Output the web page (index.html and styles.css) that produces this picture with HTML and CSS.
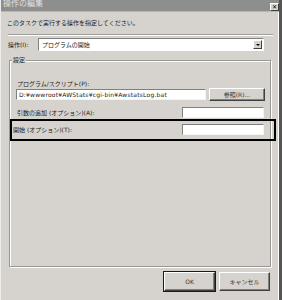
FILE: index.html
```html
<!DOCTYPE html>
<html lang="ja">
<head>
    <meta charset="UTF-8">
    <title>操作の編集</title>
    <link rel="stylesheet" href="styles.css">
</head>
<body>
    <div class="window">
        <div class="titlebar">
            <span class="title">操作の編集</span>
            <span class="close">&#x2715;</span>
        </div>

        <div class="content">
            <p class="intro">このタスクで実行する操作を指定してください。</p>
            <div class="sep"></div>

            <div class="action-row">
                <label class="action-label">操作(I):</label>
                <div class="select">
                    <span>プログラムの開始</span>
                    <span class="arrow"></span>
                </div>
            </div>

            <div class="group">
                <span class="legend">設定</span>
                <label class="path-label">プログラム/スクリプト(P):</label>
                <div class="path-row">
                    <div class="input path">D:¥wwwroot¥AWStats¥cgi-bin¥AwstatsLog.bat</div>
                    <button class="btn browse">参照(R)...</button>
                </div>
                <div class="field-row">
                    <label>引数の追加 (オプション)(A):</label>
                    <div class="input short"></div>
                </div>
                <div class="field-row highlight">
                    <label>開始 (オプション)(T):</label>
                    <div class="input short"></div>
                </div>
            </div>

            <div class="footer">
                <button class="btn default">OK</button>
                <button class="btn">キャンセル</button>
            </div>
        </div>
    </div>
</body>
</html>
```

FILE: styles.css
```css
* {
    box-sizing: border-box;
}
body {
    margin: 0;
    font-family: "DejaVu Sans", "Noto Sans CJK JP", sans-serif;
    font-size: 6px;
    color: #1a1a1a;
}
.window {
    width: 282px;
    height: 300px;
    background: #d6d3ce;
    border-left: 1px solid #ecebe7;
    border-right: 3px solid #555;
    box-shadow: inset -1px 0 0 #fff;
    overflow: hidden;
}
.titlebar {
    height: 12px;
    background: #8e8e8e;
    display: flex;
    justify-content: space-between;
    align-items: flex-start;
    border-bottom: 1px solid #b8b6b2;
}
.title {
    font-size: 8px;
    line-height: 8px;
    color: #e2e2e2;
    margin-left: 2px;
}
.close {
    width: 9px;
    height: 8px;
    margin-top: 3px;
    background: #d6d3ce;
    border: 1px solid;
    border-color: #fff #404040 #404040 #fff;
    font-size: 6px;
    line-height: 6px;
    text-align: center;
    color: #000;
    font-weight: bold;
}
.content {
    padding: 0 6px 0 7px;
}
.intro {
    margin: 7px 0 0 -1px;
    line-height: 8px;
    height: 8px;
}
.sep {
    margin-top: 7px;
    height: 2px;
    border-top: 1px solid #a09e9a;
    border-bottom: 1px solid #fff;
}
.action-row {
    display: flex;
    align-items: center;
    margin-top: 2px;
    height: 13px;
}
.action-label {
    width: 30px;
}
.select {
    width: 226px;
    height: 13px;
    background: #fff;
    border: 1px solid;
    border-color: #808080 #fff #fff #808080;
    display: flex;
    justify-content: space-between;
    align-items: center;
    padding-left: 3px;
}
.arrow {
    width: 9px;
    height: 9px;
    margin-right: 1px;
    background: #d6d3ce;
    border: 1px solid;
    border-color: #fff #404040 #404040 #fff;
    position: relative;
}
.arrow::after {
    content: "";
    position: absolute;
    left: 2px;
    top: 3px;
    border-left: 2px solid transparent;
    border-right: 2px solid transparent;
    border-top: 2px solid #000;
}
.group {
    margin: 9px 2px 0 1px;
    height: 207px;
    border: 1px solid #9a9894;
    box-shadow: inset 1px 1px 0 #fff, 1px 1px 0 #fff;
}
.legend {
    display: inline-block;
    margin: -5px 0 0 2px;
    padding: 0 1px;
    line-height: 8px;
    background: #d6d3ce;
    vertical-align: top;
}
.path-label {
    display: block;
    margin: 12px 0 0 7px;
    line-height: 8px;
}
.path-row {
    display: flex;
    align-items: center;
    gap: 3px;
    margin-left: 6px;
    height: 13px;
}
.input {
    background: #fff;
    border: 1px solid;
    border-color: #808080 #f4f4f4 #f4f4f4 #808080;
    height: 11px;
    line-height: 9px;
    padding-left: 2px;
    white-space: nowrap;
    overflow: hidden;
}
.path {
    width: 190px;
    letter-spacing: 0.2px;
}
.short {
    width: 82px;
}
.btn {
    font-family: inherit;
    font-size: 6px;
    color: #333;
    background: #d6d3ce;
    border: 1px solid;
    border-color: #fff #404040 #404040 #fff;
    box-shadow: inset -1px -1px 0 #808080;
    padding: 0;
    height: 13px;
}
.browse {
    width: 56px;
}
.field-row {
    display: flex;
    justify-content: space-between;
    align-items: center;
    margin: 6px 6px 0 0;
    padding-left: 7px;
    height: 11px;
}
.highlight {
    margin: 1px -6px 0 0;
    height: 22px;
    border: 2px solid #000;
    padding: 0 10px 0 1px;
    align-items: flex-start;
}
.highlight label {
    margin-top: 4px;
}
.highlight .input {
    margin-top: 3px;
}
.footer {
    display: flex;
    justify-content: flex-end;
    gap: 4px;
    margin-top: 5px;
    padding-right: 3px;
}
.footer .btn {
    width: 51px;
    height: 19px;
}
.default {
    outline: 1px solid #1a1a1a;
    outline-offset: 0;
}
```
